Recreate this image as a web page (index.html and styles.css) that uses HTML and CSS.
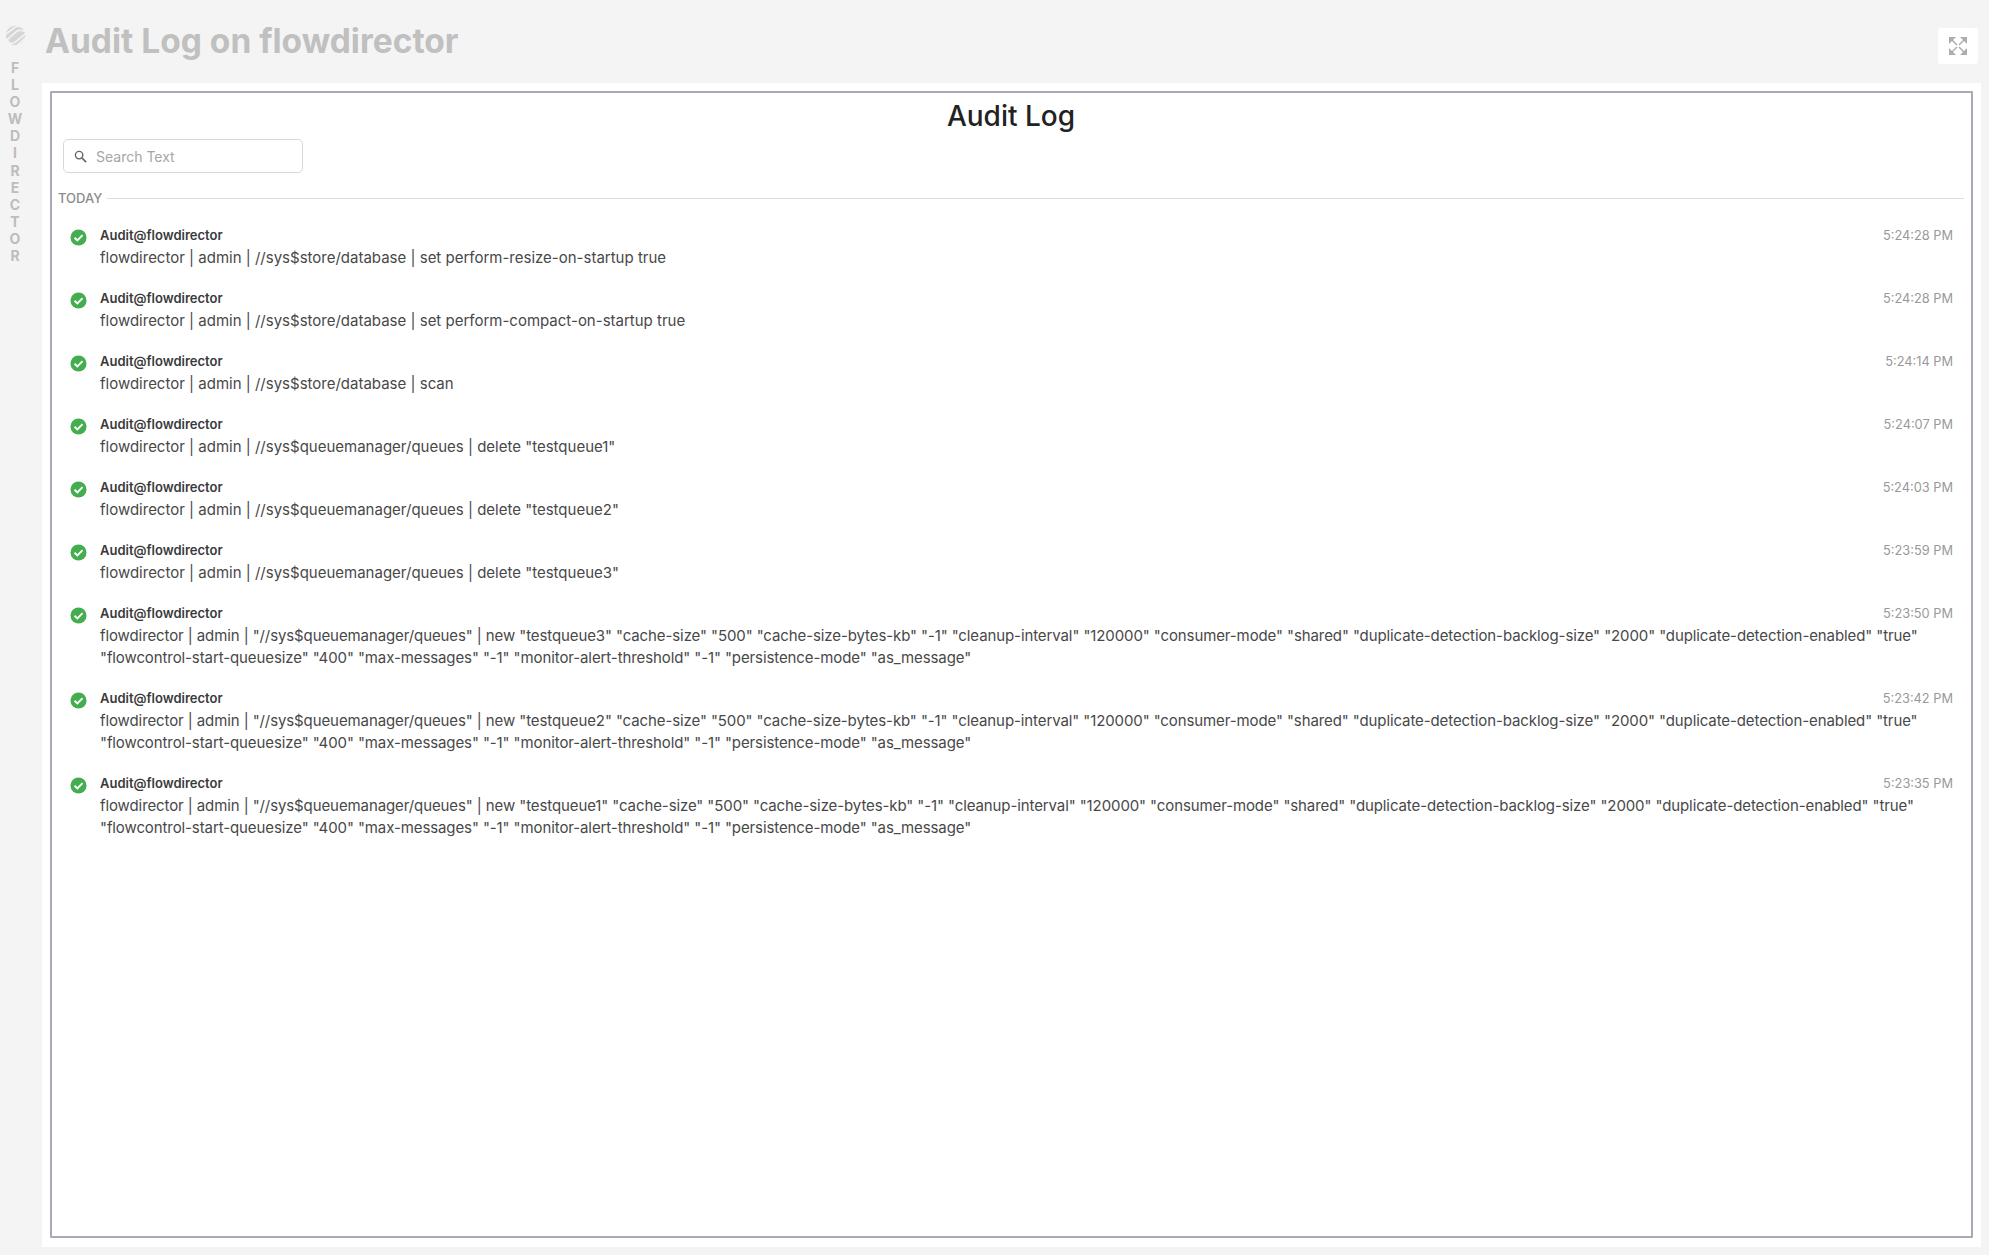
FILE: index.html
```html
<!DOCTYPE html>
<html lang="en">
<head>
<meta charset="utf-8">
<title>Audit Log on flowdirector</title>
<link rel="stylesheet" href="styles.css">
</head>
<body>
<div class="app">
  <aside class="rail">
    <svg class="logo" viewBox="0 0 22 22"><circle cx="11" cy="11" r="10.200" fill="#d6d6d6"/><g fill="none" stroke="#f4f4f4" stroke-width="1.700"><path d="M-1 11 9.500 3C12 1.300 14 1 17 1.500"/><path d="M1 16.500 12.500 6.500C15 4.800 17.500 4.800 22 7.500"/><path d="M0 13.500 4.500 18.500C6.500 20 8.500 19.500 10 18.500L23 8"/><path d="M8 23C11 23 13 21.500 15 19.500L23 12"/></g></svg>
    <div class="brand"><span>F</span><span>L</span><span>O</span><span>W</span><span>D</span><span>I</span><span>R</span><span>E</span><span>C</span><span>T</span><span>O</span><span>R</span></div>
  </aside>
  <main class="main">
    <header class="top">
      <h1 class="page-title">Audit Log on flowdirector</h1>
      <button class="expand" aria-label="Expand">
        <svg viewBox="0 0 18 18" width="18" height="18"><g fill="#adadad"><path d="M0 0h7L0 7z"/><path d="M18 0v7L11 0z"/><path d="M0 18v-7l7 7z"/><path d="M18 18h-7l7-7z"/></g><g stroke="#adadad" stroke-width="1.500"><path d="M3 3 8 8"/><path d="M15 3 10 8"/><path d="M3 15 8 10"/><path d="M15 15 10 10"/></g></svg>
      </button>
    </header>
    <section class="panel">
      <div class="frame">
        <h2 class="log-title">Audit Log</h2>
        <label class="search">
          <svg viewBox="0 0 14 14" width="13" height="13"><circle cx="5.500" cy="5.500" r="4" fill="none" stroke="#666" stroke-width="1.500"/><path d="M8.500 8.500 13 13" stroke="#666" stroke-width="1.700"/></svg>
          <input class="search-input" type="text" placeholder="Search Text">
        </label>
        <div class="day"><span>TODAY</span><i class="day-line"></i></div>
        <ul class="list">
          <li class="row"><svg class="ok" viewBox="0 0 18 18"><circle cx="9" cy="9" r="8.500" fill="#43ad4f"/><path d="M4.800 9.300 7.800 12.200 13.300 6.500" fill="none" stroke="#fff" stroke-width="2"/></svg><div class="body"><div class="head"><b class="who">Audit@flowdirector</b><time class="when">5:24:28 PM</time></div><p class="msg">flowdirector | admin | //sys$store/database | set perform-resize-on-startup true</p></div></li>
          <li class="row"><svg class="ok" viewBox="0 0 18 18"><circle cx="9" cy="9" r="8.500" fill="#43ad4f"/><path d="M4.800 9.300 7.800 12.200 13.300 6.500" fill="none" stroke="#fff" stroke-width="2"/></svg><div class="body"><div class="head"><b class="who">Audit@flowdirector</b><time class="when">5:24:28 PM</time></div><p class="msg">flowdirector | admin | //sys$store/database | set perform-compact-on-startup true</p></div></li>
          <li class="row"><svg class="ok" viewBox="0 0 18 18"><circle cx="9" cy="9" r="8.500" fill="#43ad4f"/><path d="M4.800 9.300 7.800 12.200 13.300 6.500" fill="none" stroke="#fff" stroke-width="2"/></svg><div class="body"><div class="head"><b class="who">Audit@flowdirector</b><time class="when">5:24:14 PM</time></div><p class="msg">flowdirector | admin | //sys$store/database | scan</p></div></li>
          <li class="row"><svg class="ok" viewBox="0 0 18 18"><circle cx="9" cy="9" r="8.500" fill="#43ad4f"/><path d="M4.800 9.300 7.800 12.200 13.300 6.500" fill="none" stroke="#fff" stroke-width="2"/></svg><div class="body"><div class="head"><b class="who">Audit@flowdirector</b><time class="when">5:24:07 PM</time></div><p class="msg">flowdirector | admin | //sys$queuemanager/queues | delete "testqueue1"</p></div></li>
          <li class="row"><svg class="ok" viewBox="0 0 18 18"><circle cx="9" cy="9" r="8.500" fill="#43ad4f"/><path d="M4.800 9.300 7.800 12.200 13.300 6.500" fill="none" stroke="#fff" stroke-width="2"/></svg><div class="body"><div class="head"><b class="who">Audit@flowdirector</b><time class="when">5:24:03 PM</time></div><p class="msg">flowdirector | admin | //sys$queuemanager/queues | delete "testqueue2"</p></div></li>
          <li class="row"><svg class="ok" viewBox="0 0 18 18"><circle cx="9" cy="9" r="8.500" fill="#43ad4f"/><path d="M4.800 9.300 7.800 12.200 13.300 6.500" fill="none" stroke="#fff" stroke-width="2"/></svg><div class="body"><div class="head"><b class="who">Audit@flowdirector</b><time class="when">5:23:59 PM</time></div><p class="msg">flowdirector | admin | //sys$queuemanager/queues | delete "testqueue3"</p></div></li>
          <li class="row"><svg class="ok" viewBox="0 0 18 18"><circle cx="9" cy="9" r="8.500" fill="#43ad4f"/><path d="M4.800 9.300 7.800 12.200 13.300 6.500" fill="none" stroke="#fff" stroke-width="2"/></svg><div class="body"><div class="head"><b class="who">Audit@flowdirector</b><time class="when">5:23:50 PM</time></div><p class="msg msg-long">flowdirector | admin | "//sys$queuemanager/queues" | new "testqueue3" "cache-size" "500" "cache-size-bytes-kb" "-1" "cleanup-interval" "120000" "consumer-mode" "shared" "duplicate-detection-backlog-size" "2000" "duplicate-detection-enabled" "true" "flowcontrol-start-queuesize" "400" "max-messages" "-1" "monitor-alert-threshold" "-1" "persistence-mode" "as_message"</p></div></li>
          <li class="row"><svg class="ok" viewBox="0 0 18 18"><circle cx="9" cy="9" r="8.500" fill="#43ad4f"/><path d="M4.800 9.300 7.800 12.200 13.300 6.500" fill="none" stroke="#fff" stroke-width="2"/></svg><div class="body"><div class="head"><b class="who">Audit@flowdirector</b><time class="when">5:23:42 PM</time></div><p class="msg msg-long">flowdirector | admin | "//sys$queuemanager/queues" | new "testqueue2" "cache-size" "500" "cache-size-bytes-kb" "-1" "cleanup-interval" "120000" "consumer-mode" "shared" "duplicate-detection-backlog-size" "2000" "duplicate-detection-enabled" "true" "flowcontrol-start-queuesize" "400" "max-messages" "-1" "monitor-alert-threshold" "-1" "persistence-mode" "as_message"</p></div></li>
          <li class="row"><svg class="ok" viewBox="0 0 18 18"><circle cx="9" cy="9" r="8.500" fill="#43ad4f"/><path d="M4.800 9.300 7.800 12.200 13.300 6.500" fill="none" stroke="#fff" stroke-width="2"/></svg><div class="body"><div class="head"><b class="who">Audit@flowdirector</b><time class="when">5:23:35 PM</time></div><p class="msg msg-long">flowdirector | admin | "//sys$queuemanager/queues" | new "testqueue1" "cache-size" "500" "cache-size-bytes-kb" "-1" "cleanup-interval" "120000" "consumer-mode" "shared" "duplicate-detection-backlog-size" "2000" "duplicate-detection-enabled" "true" "flowcontrol-start-queuesize" "400" "max-messages" "-1" "monitor-alert-threshold" "-1" "persistence-mode" "as_message"</p></div></li>
        </ul>
      </div>
    </section>
  </main>
</div>
</body>
</html>
```
FILE: styles.css
```css
* { box-sizing: border-box; }
html, body { margin: 0; height: 100%; }
body { background: #f4f4f4; font-family: Inter, "Liberation Sans", sans-serif; color: #333; overflow: hidden; }
.app { display: flex; height: 1255px; }
.rail { width: 42px; flex: none; display: flex; flex-direction: column; align-items: center; padding: 25px 12px 0 0; overflow: hidden; }
.logo { flex: none; width: 21px; height: 21px; }
.brand { display: flex; flex-direction: column; align-items: center; margin-top: 13px; font-size: 14px; line-height: 17.100px; font-weight: 700; color: #bdbdbd; }
.main { flex: 1; min-width: 0; display: flex; flex-direction: column; padding: 0 8px 8px 0; }
.top { height: 83px; flex: none; display: flex; justify-content: space-between; align-items: flex-start; padding: 19px 0 0 3px; }
.page-title { margin: 0; font-size: 33.500px; line-height: 44px; font-weight: 700; color: #c0c0c0; }
.expand { width: 40px; height: 36px; margin: 9px 3px 0 0; padding: 0; border: 0; border-radius: 3px; background: #fff; display: flex; align-items: center; justify-content: center; }
.panel { flex: 1; min-height: 0; background: #fff; padding: 8px 8px 9px; }
.frame { height: 100%; border: 2px solid #aba9b8; border-radius: 1px; padding: 5px 7px 0 6px; }
.log-title { margin: 0; text-align: center; font-size: 28px; line-height: 36px; font-weight: 500; color: #222; }
.search { display: flex; align-items: center; gap: 9px; width: 240px; height: 34px; margin: 5px 0 0 5px; padding: 0 10px; border: 1px solid #d8d8d8; border-radius: 5px; }
.search-input { flex: 1; min-width: 0; border: 0; outline: 0; padding: 0; background: none; font: 14px Inter, "Liberation Sans", sans-serif; }
.search-input::placeholder { color: #a6a6a6; opacity: 1; }
.day { display: flex; align-items: center; gap: 5px; margin-top: 16px; height: 18px; font-size: 13px; font-weight: 500; color: #8c8c8c; }
.day-line { flex: 1; height: 1px; background: #dcdcdc; }
.list { list-style: none; margin: 17px 0 0; padding: 0; }
.row { display: flex; gap: 13px; padding: 0 11px 18px 12px; }
.ok { flex: none; width: 17px; height: 17px; margin-top: 5px; }
.body { flex: 1; min-width: 0; }
.head { display: flex; justify-content: space-between; align-items: center; height: 23px; }
.who { font-size: 13px; font-weight: 600; color: #3a3a3a; margin-bottom: 2px; }
.when { font-size: 12.800px; color: #999; }
.msg { margin: 0; font-size: 15px; line-height: 22px; color: #484848; }
.msg-long { letter-spacing: -0.100px; }
```
